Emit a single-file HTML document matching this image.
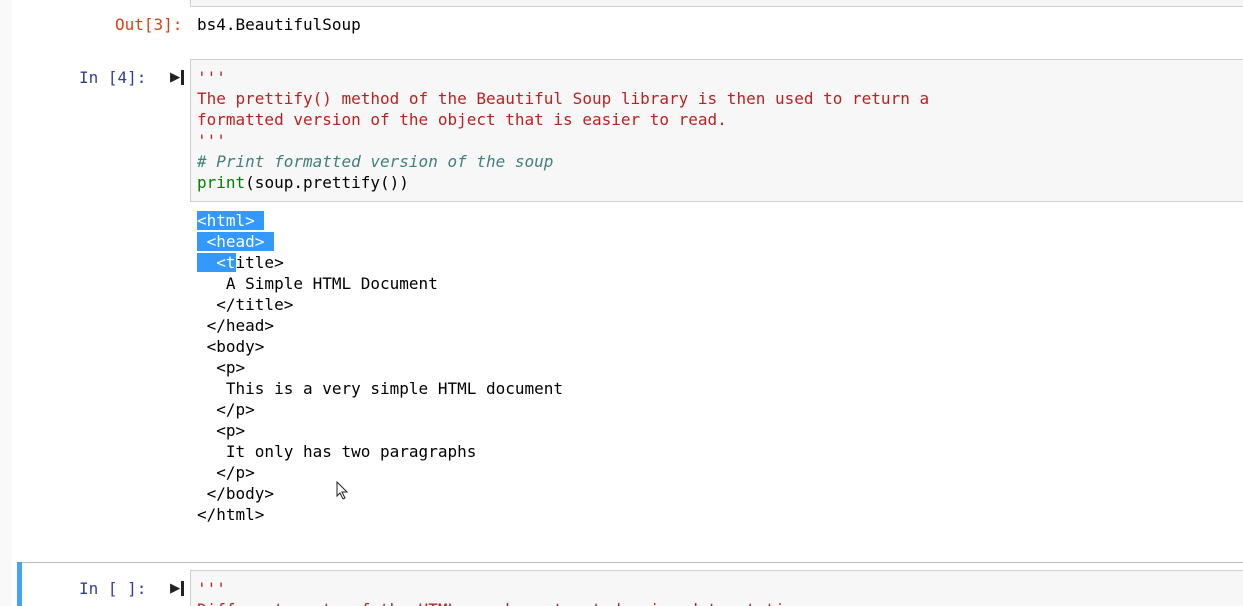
<!DOCTYPE html>
<html style="overflow:hidden;height:606px"><head><style>
body{margin:0;width:1243px;height:606px;overflow:hidden;background:#fff;position:relative;font-family:"DejaVu Sans Mono","Liberation Mono",monospace;font-size:16px;}
.a{position:absolute;white-space:pre;line-height:21px;}
.box{position:absolute;background:#f7f7f7;border:1px solid #cfcfcf;}
.p{color:#303f9f}.o{color:#d84315}
.s{color:#ba2121}.c{color:#408080;font-style:italic}.g{color:#008000}
.sel{background:#3399ff;color:#fff}
</style></head><body>
<div style="position:absolute;left:0;top:0;width:12px;height:606px;background:#f9f9f9"></div>
<div class="box" style="left:190px;top:-10px;width:1100px;height:15px"></div>
<div class="a o" style="left:115px;top:14px">Out[3]:</div>
<div class="a" style="left:197px;top:14px">bs4.BeautifulSoup</div>

<div class="a p" style="left:79px;top:67px">In [4]:</div>
<div class="a" style="left:170px;top:67px;font-size:17px;font-weight:bold;color:#222">&#9654;</div>
<div style="position:absolute;left:181px;top:70px;width:3px;height:15px;background:#222"></div>
<div class="box" style="left:190px;top:59px;width:1100px;height:141px"></div>
<div class="a" style="left:197px;top:67px"><span class="s">'''
The prettify() method of the Beautiful Soup library is then used to return a
formatted version of the object that is easier to read.
'''</span>
<span class="c"># Print formatted version of the soup</span>
<span class="g">print</span>(soup.prettify())</div>

<div class="a" style="left:197px;top:210px"><span class="sel">&lt;html&gt; </span>
<span class="sel"> &lt;head&gt; </span>
<span class="sel">  &lt;t</span>itle&gt;
   A Simple HTML Document
  &lt;/title&gt;
 &lt;/head&gt;
 &lt;body&gt;
  &lt;p&gt;
   This is a very simple HTML document
  &lt;/p&gt;
  &lt;p&gt;
   It only has two paragraphs
  &lt;/p&gt;
 &lt;/body&gt;
&lt;/html&gt;</div>

<svg style="position:absolute;left:336px;top:481px" width="14" height="20"><path d="M1 1 L1 15 L4 12 L7 18 L9 17 L6 11 L11 11 Z" fill="#fff" stroke="#222" stroke-width="1"/></svg>

<div style="position:absolute;left:17px;top:562px;width:1230px;height:1px;background:#bdbdbd"></div>
<div style="position:absolute;left:17px;top:562px;width:5px;height:44px;background:#42a5f5"></div>
<div class="a p" style="left:79px;top:578px">In [ ]:</div>
<div class="a" style="left:170px;top:578px;font-size:17px;font-weight:bold;color:#222">&#9654;</div>
<div style="position:absolute;left:181px;top:581px;width:3px;height:15px;background:#222"></div>
<div class="box" style="left:190px;top:570px;width:1100px;height:60px"></div>
<div class="a s" style="left:197px;top:578px">'''
Different parts of the HTML can be extracted using dot notation</div>
</body></html>
